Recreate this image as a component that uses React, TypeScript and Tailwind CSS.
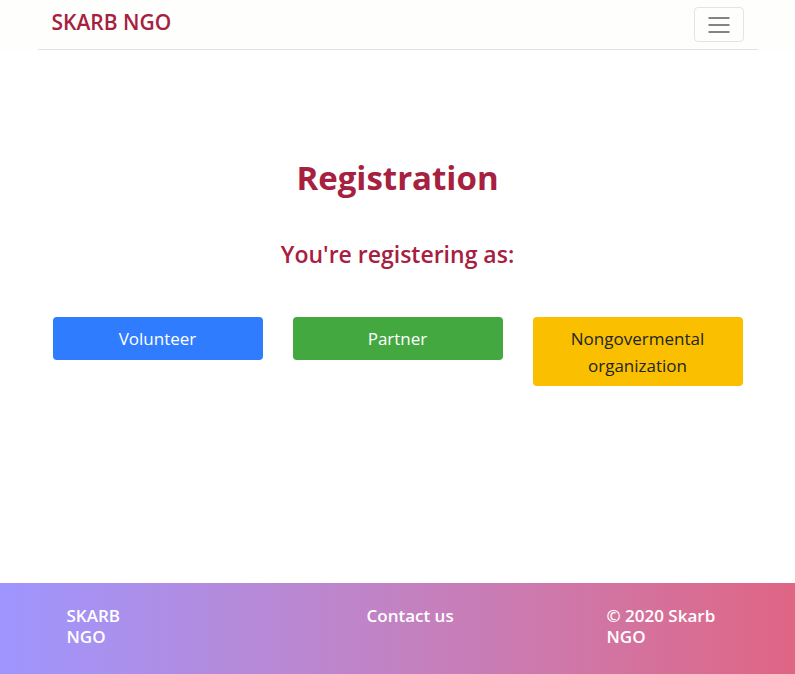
export default function App() {
  return (
    <div className="flex min-h-screen flex-col bg-white font-['Open_Sans',sans-serif] text-[#a62040]">
      <header className="bg-[#fefefc]">
        <nav className="mx-auto flex h-[50px] max-w-[720px] items-start justify-between border-b border-[#dee2e6] px-3.5 pt-[7px]">
          <a href="#" className="text-[21px] leading-[30px] font-semibold">SKARB NGO</a>
          <button type="button" aria-label="Toggle navigation" className="flex h-[35px] w-[50px] items-center justify-center rounded border border-black/10">
            <svg width="22" height="17" viewBox="0 0 22 17" aria-hidden="true">
              <path stroke="rgba(0,0,0,0.48)" strokeWidth="2" d="M.5 2h21M.5 9h21M.5 16h21" />
            </svg>
          </button>
        </nav>
      </header>
      <main className="mx-auto w-full max-w-[720px] flex-1 px-[15px] pt-[104px] text-center">
        <h1 className="text-[33px] leading-12 font-bold">Registration</h1>
        <h2 className="mt-8 text-[23px] leading-10 font-semibold">You're registering as:</h2>
        <div className="mt-[43px] grid grid-cols-3 items-start gap-[30px] text-[17px] leading-[27px]">
          <button type="button" className="rounded bg-[#2f7cff] px-6 py-2 text-white">Volunteer</button>
          <button type="button" className="rounded bg-[#42a83f] px-6 py-2 text-white">Partner</button>
          <button type="button" className="rounded bg-[#fac000] px-6 pt-2 pb-[7px] text-[#212529]">Nongovermental organization</button>
        </div>
      </main>
      <footer className="bg-linear-to-r from-[#9e95ff] to-[#df6584] text-[17px] leading-[21px] font-semibold text-white">
        <div className="mx-auto grid max-w-[720px] grid-cols-12 pt-[22px] pb-[27px]">
          <p className="col-span-2 px-[29px]">SKARB NGO</p>
          <a href="#" className="col-span-4 col-start-6 px-[29px]">Contact us</a>
          <p className="col-span-3 col-start-10 px-[29px]">© 2020 Skarb NGO</p>
        </div>
      </footer>
    </div>
  );
}
